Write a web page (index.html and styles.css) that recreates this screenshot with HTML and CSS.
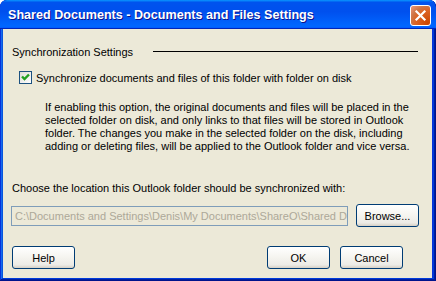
FILE: index.html
```html
<!DOCTYPE html>
<html lang="en">
<head>
    <meta charset="UTF-8">
    <title>Shared Documents - Documents and Files Settings</title>
    <link rel="stylesheet" href="styles.css">
</head>
<body>
    <div class="window">
        <div class="titlebar">
            <span class="title">Shared Documents - Documents and Files Settings</span>
            <span class="close-btn">
                <svg width="13" height="13" viewBox="0 0 13 13">
                    <path d="M2.5 2.5 L10.5 10.5 M10.5 2.5 L2.5 10.5" stroke="#fff" stroke-width="2.2" stroke-linecap="square"/>
                </svg>
            </span>
        </div>

        <div class="client">
            <div class="group-head">
                <span>Synchronization Settings</span>
                <span class="group-line"></span>
            </div>

            <label class="check-row">
                <span class="checkbox">
                    <svg width="9" height="9" viewBox="0 0 9 9">
                        <path d="M1 3.5 L3.5 6 L8 1.5" fill="none" stroke="#21a121" stroke-width="2.4"/>
                    </svg>
                </span>
                <span>Synchronize documents and files of this folder with folder on disk</span>
            </label>

            <p class="note">
                If enabling this option, the original documents and files will be placed in the<br>
                selected folder on disk, and only links to that files will be stored in Outlook<br>
                folder. The changes you make in the selected folder on the disk, including<br>
                adding or deleting files, will be applied to the Outlook folder and vice versa.
            </p>

            <div class="choose">Choose the location this Outlook folder should be synchronized with:</div>

            <div class="path-row">
                <div class="path-box"><span>C:\Documents and Settings\Denis\My Documents\ShareO\Shared D</span></div>
                <button class="xp-button browse">Browse...</button>
            </div>

            <div class="button-row">
                <button class="xp-button">Help</button>
                <span class="spacer"></span>
                <button class="xp-button">OK</button>
                <button class="xp-button">Cancel</button>
            </div>
        </div>
    </div>
</body>
</html>
```

FILE: styles.css
```css
body {
    margin: 0;
    background: #ffffff;
    font-family: "Liberation Sans", Arial, sans-serif;
    font-size: 11px;
    color: #000000;
}
.window {
    width: 436px;
    height: 281px;
    display: flex;
    flex-direction: column;
    background: #0831d9;
    border-radius: 7px 7px 0 0;
    box-shadow: inset -1px -1px #00138c, inset 1px 1px #0831d9,
                inset -2px -2px #001ea0, inset 2px 2px #166aee,
                inset -3px -3px #003bda, inset 3px 3px #0855dd;
    overflow: hidden;
}
.titlebar {
    height: 29px;
    display: flex;
    align-items: center;
    justify-content: space-between;
    padding: 0 5px 0 8px;
    background: linear-gradient(180deg, #0997ff, #0053ee 8%, #0050ee 40%, #0066ff 88%, #0066ff 93%, #005bff 95%, #0026b8 96%, #0026b8);
    border-radius: 7px 7px 0 0;
}
.title {
    color: #ffffff;
    font-weight: bold;
    font-size: 12.6px;
    text-shadow: 1px 1px #0f1089;
    padding-top: 1px;
}
.close-btn {
    width: 21px;
    height: 21px;
    box-sizing: border-box;
    border: 1px solid #ffffff;
    border-radius: 3px;
    background: radial-gradient(circle at 90% 90%, #cc4600 0%, #dc6527 55%, #cd7546 70%, #e58d6a 90%);
    display: flex;
    align-items: center;
    justify-content: center;
    margin-top: 2px;
}
.close-btn svg { display: block; }

.client {
    flex: 1;
    margin: 0 4px 3px 3px;
    background: #ece9d8;
    padding: 16px 13px 9px 8px;
    display: flex;
    flex-direction: column;
}
.group-head {
    display: flex;
    align-items: center;
    height: 13px;
    padding-left: 1px;
    margin-right: 1px;
}
.group-line {
    flex: 1;
    height: 1px;
    background: #000000;
    margin-left: 20px;
}
.check-row {
    display: flex;
    align-items: center;
    margin-top: 13px;
    padding-left: 8px;
    height: 13px;
}
.checkbox {
    width: 13px;
    height: 13px;
    box-sizing: border-box;
    border: 1px solid #1c5180;
    background: linear-gradient(135deg, #dcdcd7, #ffffff);
    display: flex;
    align-items: center;
    justify-content: center;
    margin-right: 4px;
}
.checkbox svg { display: block; }
.note {
    margin: 17px 0 0 0;
    padding-left: 34px;
    line-height: 13px;
    white-space: nowrap;
}
.choose {
    margin-top: 29px;
    padding-left: 1px;
    line-height: 13px;
}
.path-row {
    display: flex;
    align-items: center;
    margin-top: 9px;
}
.path-box {
    width: 337px;
    height: 20px;
    box-sizing: border-box;
    border: 1px solid #7f9db9;
    color: #aca899;
    line-height: 18px;
    padding-left: 3px;
    white-space: nowrap;
    overflow: hidden;
}
.xp-button {
    width: 63px;
    height: 23px;
    box-sizing: border-box;
    font-family: "Liberation Sans", Arial, sans-serif;
    font-size: 11px;
    color: #000000;
    border: 1px solid #003c74;
    border-radius: 3px;
    background: linear-gradient(180deg, #ffffff 0%, #f5f4ef 50%, #ecebe6 85%, #d6d0c5 100%);
    padding: 0;
}
.browse {
    margin-left: 8px;
}
.button-row {
    display: flex;
    margin-top: auto;
    padding-left: 1px;
    margin-right: 16px;
    gap: 10px;
}
.spacer {
    flex: 1;
}
```
